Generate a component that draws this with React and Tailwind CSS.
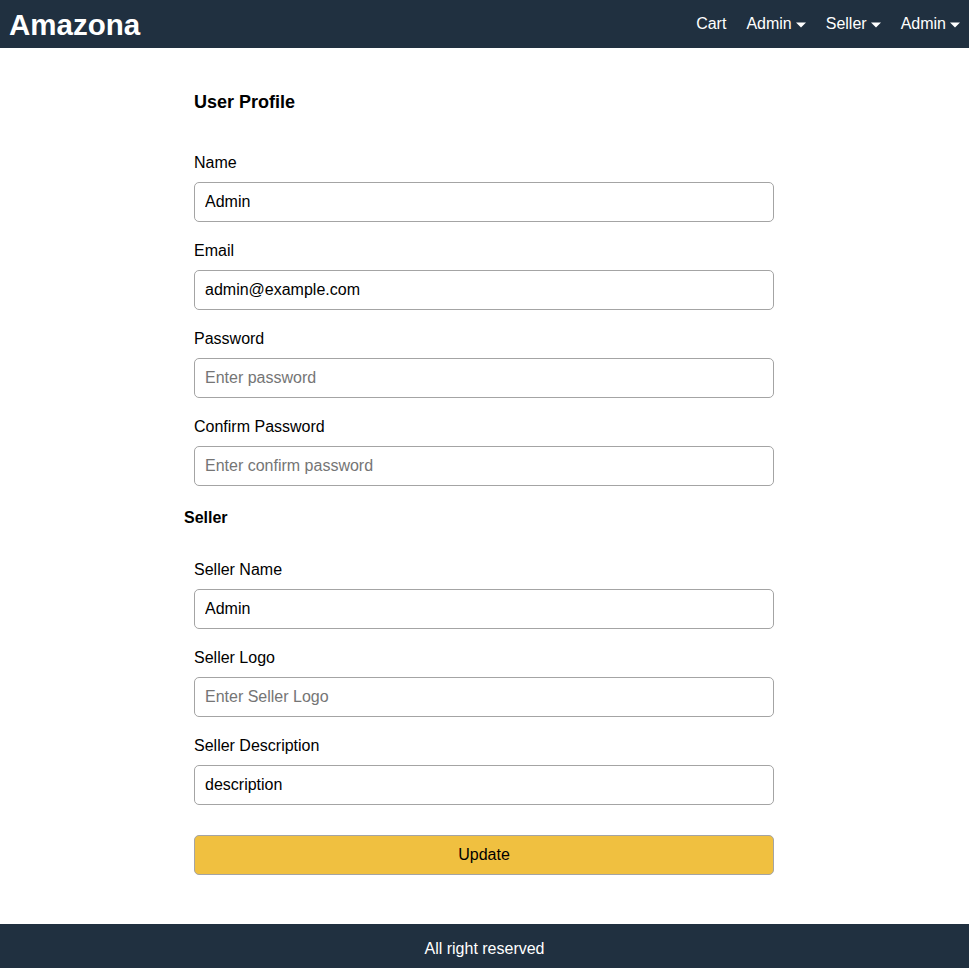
const FONT = "font-['Liberation_Sans',Arial,sans-serif]"

const Caret = () => (
  <svg width="10" height="6" viewBox="0 0 10 6" className="ml-[4px] mt-[1px]">
    <path d="M0 0.5 L10 0.5 L5 5.5 Z" fill="currentColor" />
  </svg>
)

const Field = ({ label, value, placeholder }) => (
  <div className="flex flex-col mx-[10px] my-[10px]">
    <label className="my-[10px] leading-[18px]">{label}</label>
    <input
      type="text"
      defaultValue={value}
      placeholder={placeholder}
      className="h-[40px] px-[10px] border border-[#a4a4a4] rounded-[5px] text-black placeholder:text-[#757575] outline-none"
    />
  </div>
)

export default function App() {
  return (
    <div className={`${FONT} min-h-screen flex flex-col text-[16px] text-black bg-white`}>
      <header className="h-[48px] bg-[#203040] flex items-center justify-between text-white">
        <a className="pl-[9px] pt-[2px] text-[29.5px] font-bold leading-none">Amazona</a>
        <nav className="flex items-center gap-[20px] pr-[9px]">
          <a className="ml-[1px]">Cart</a>
          <a className="flex items-center">Admin<Caret /></a>
          <a className="flex items-center">Seller<Caret /></a>
          <a className="flex items-center">Admin<Caret /></a>
        </nav>
      </header>

      <main className="flex-1 py-[10px] pl-[10px] pr-[11px]">
        <form className="max-w-[600px] mx-auto">
          <div className="m-[10px] pt-[14px] pb-[11px]">
            <h1 className="py-[10px] text-[18px] font-bold leading-[21px]">User Profile</h1>
          </div>
          <Field label="Name" value="Admin" />
          <Field label="Email" value="admin@example.com" />
          <Field label="Password" placeholder="Enter password" />
          <Field label="Confirm Password" placeholder="Enter confirm password" />
          <h2 className="pt-[13px] pb-[14px] text-[16px] font-bold leading-[18px]">Seller</h2>
          <Field label="Seller Name" value="Admin" />
          <Field label="Seller Logo" placeholder="Enter Seller Logo" />
          <Field label="Seller Description" value="description" />
          <div className="flex flex-col m-[10px]">
            <label className="my-[10px]" />
            <button
              type="submit"
              className="h-[40px] bg-[#f0c040] border border-[#a4a4a4] rounded-[5px] text-black"
            >
              Update
            </button>
          </div>
        </form>
      </main>

      <footer className="h-[44px] pt-[6px] bg-[#203040] text-white flex items-center justify-center">
        All right reserved
      </footer>
    </div>
  )
}
